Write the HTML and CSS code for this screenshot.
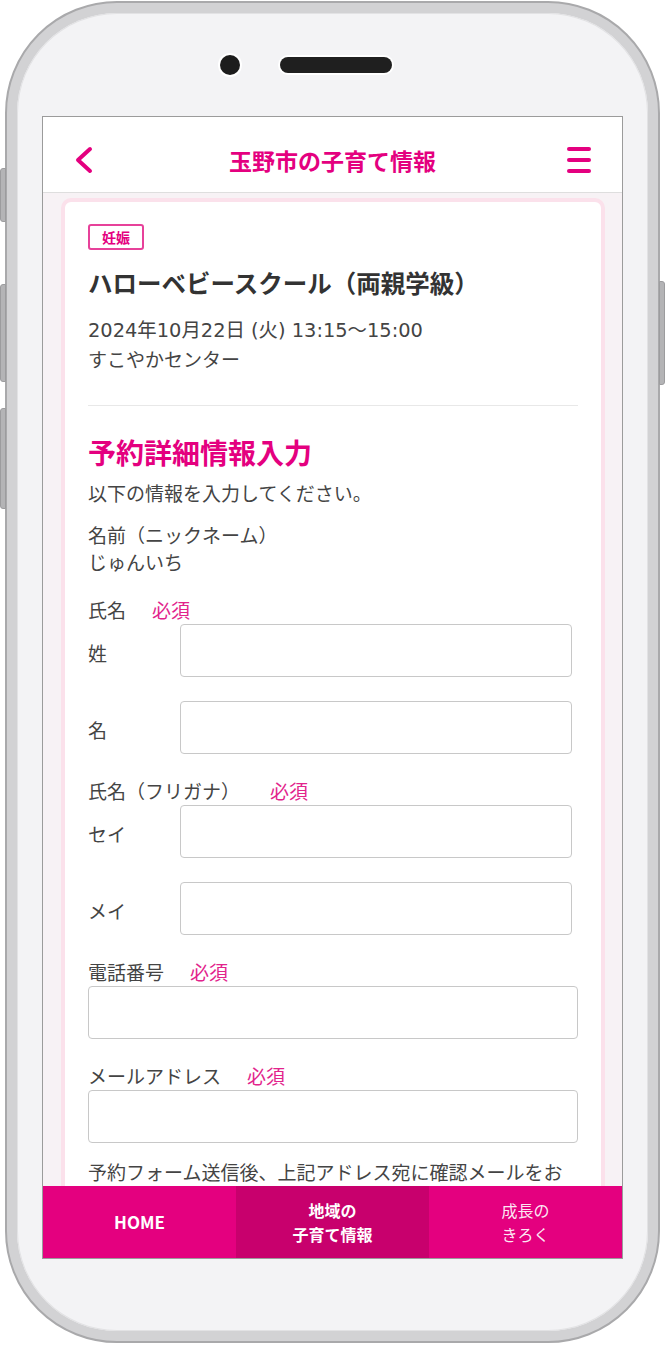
FILE: index.html
```html
<!DOCTYPE html>
<html lang="ja">
<head>
  <meta charset="UTF-8" />
  <meta name="viewport" content="width=device-width, initial-scale=1.0"/>
  <title>玉野市の子育て情報</title>
  <link rel="stylesheet" href="styles.css">
</head>
<body>
  <div class="phone">
    <span class="btn btn-mute"></span>
    <span class="btn btn-vol-up"></span>
    <span class="btn btn-vol-down"></span>
    <span class="btn btn-power"></span>

    <div class="phone-inner">
      <div class="sensors">
        <span class="camera"></span>
        <span class="speaker"></span>
      </div>

      <div class="screen">
        <header class="app-header">
          <svg class="back" width="22" height="30" viewBox="0 0 22 30">
            <polyline points="16,4 4,15 16,26" fill="none" stroke="#e4007f" stroke-width="4" stroke-linecap="round" stroke-linejoin="round"/>
          </svg>
          <h1 class="app-title">玉野市の子育て情報</h1>
          <div class="menu">
            <span></span><span></span><span></span>
          </div>
        </header>

        <main class="content">
          <div class="card">
            <span class="tag">妊娠</span>
            <h2 class="event-title">ハローベビースクール（両親学級）</h2>
            <p class="event-info"><span class="event-date">2024年10月22日 (火) 13:15〜15:00</span><br>すこやかセンター</p>

            <hr class="divider">

            <h3 class="form-title">予約詳細情報入力</h3>
            <p class="lead">以下の情報を入力してください。</p>

            <div class="nickname">
              <p>名前（ニックネーム）</p>
              <p>じゅんいち</p>
            </div>

            <div class="group">
              <div class="label">氏名<span class="req">必須</span></div>
              <div class="row">
                <span class="sub">姓</span>
                <input type="text" class="field">
              </div>
              <div class="row">
                <span class="sub">名</span>
                <input type="text" class="field">
              </div>
            </div>

            <div class="group">
              <div class="label">氏名（フリガナ）<span class="req wide">必須</span></div>
              <div class="row">
                <span class="sub">セイ</span>
                <input type="text" class="field">
              </div>
              <div class="row">
                <span class="sub">メイ</span>
                <input type="text" class="field">
              </div>
            </div>

            <div class="group">
              <div class="label">電話番号<span class="req">必須</span></div>
              <input type="tel" class="field full">
            </div>

            <div class="group">
              <div class="label">メールアドレス<span class="req">必須</span></div>
              <input type="email" class="field full">
            </div>

            <p class="note">予約フォーム送信後、上記アドレス宛に確認メールをお</p>
          </div>
        </main>

        <nav class="tabbar">
          <a class="tab tab-bold">HOME</a>
          <a class="tab tab-bold active">地域の<br>子育て情報</a>
          <a class="tab">成長の<br>きろく</a>
        </nav>
      </div>
    </div>
  </div>
</body>
</html>
```

FILE: styles.css
```css
* {
  box-sizing: border-box;
}
body {
  margin: 0;
  background: #fff;
  font-family: "Noto Sans CJK JP", "Noto Sans", sans-serif;
  color: #444;
}

/* phone frame */
.phone {
  position: relative;
  width: 655px;
  height: 1342px;
  margin: 1px 0 0 5px;
  padding: 10px;
  background: #d2d2d4;
  border: 2px solid #a9a9ab;
  border-radius: 112px;
}
.phone-inner {
  display: flex;
  flex-direction: column;
  height: 100%;
  padding: 0 25px 72px;
  background: #f3f3f5;
  border-radius: 100px;
  box-shadow: inset 0 0 0 1px #e2e2e4;
}
.btn {
  position: absolute;
  width: 6px;
  background: #b4b4b6;
  border: 1px solid #9c9c9e;
}
.btn-mute { left: -7px; top: 165px; height: 54px; border-radius: 3px 0 0 3px; }
.btn-vol-up { left: -7px; top: 281px; height: 98px; border-radius: 3px 0 0 3px; }
.btn-vol-down { left: -7px; top: 405px; height: 101px; border-radius: 3px 0 0 3px; }
.btn-power { right: -7px; top: 278px; height: 104px; border-radius: 0 3px 3px 0; }

.sensors {
  display: flex;
  align-items: center;
  justify-content: center;
  gap: 40px;
  height: 103px;
  padding: 0 54px 0 0;
}
.camera {
  width: 20px;
  height: 20px;
  border-radius: 50%;
  background: #1c1c1c;
  box-shadow: 0 0 0 2px #fff;
}
.speaker {
  width: 112px;
  height: 16px;
  border-radius: 8px;
  background: #1f1f1f;
  box-shadow: 0 0 0 2px #fff;
}

/* screen */
.screen {
  display: flex;
  flex-direction: column;
  height: 1143px;
  border: 1px solid #9b9b9b;
  background: #f7f2f5;
  overflow: hidden;
}
.app-header {
  display: flex;
  align-items: center;
  justify-content: space-between;
  height: 76px;
  padding: 0 31px;
  background: #fff;
  border-bottom: 1px solid #dedede;
  flex-shrink: 0;
}
.back {
  display: block;
  margin-top: 10px;
}
.app-title {
  margin: 10px 0 0 2px;
  font-size: 23px;
  font-weight: bold;
  color: #e4007f;
}
.menu {
  display: flex;
  flex-direction: column;
  gap: 7px;
  width: 24px;
  margin-top: 10px;
}
.menu span {
  height: 4px;
  border-radius: 2px;
  background: #e4007f;
}

.content {
  flex: 1;
  overflow: hidden;
  padding: 5px 17px 0 18px;
}
.card {
  background: #fff;
  border: 4px solid #fbe1eb;
  border-radius: 10px;
  padding: 22px 23px 30px;
}
.tag {
  display: inline-block;
  width: 56px;
  height: 26px;
  line-height: 22px;
  text-align: center;
  font-size: 14px;
  font-weight: bold;
  color: #e4007f;
  border: 2px solid #e7419a;
  border-radius: 3px;
}
.event-title {
  margin: 16px 0 0;
  font-size: 24.5px;
  line-height: 34px;
  font-weight: bold;
  color: #333;
}
.event-info {
  margin: 15px 0 0;
  font-size: 19px;
  line-height: 28px;
}
.event-date {
  font-family: "DejaVu Sans", "Noto Sans CJK JP", sans-serif;
  font-size: 19.4px;
}
.divider {
  margin: 32px 0 0;
  border: none;
  border-top: 1px solid #e8e8e8;
}
.form-title {
  margin: 26px 0 0;
  font-size: 28px;
  line-height: 40px;
  font-weight: bold;
  color: #e4007f;
}
.lead {
  margin: 7px 0 0;
  font-size: 19px;
  line-height: 28px;
}
.nickname {
  margin-top: 14px;
}
.nickname p {
  margin: 0;
  font-size: 19px;
  line-height: 27px;
}
.group {
  margin-top: 21px;
}
.group + .group {
  margin-top: 23px;
}
.label {
  font-size: 19px;
  line-height: 28px;
}
.req {
  margin-left: 26px;
  color: #e2238c;
}
.req.wide {
  margin-left: 30px;
}
.row {
  display: flex;
  align-items: center;
  padding-right: 6px;
}
.row + .row {
  margin-top: 24px;
}
.sub {
  width: 92px;
  flex-shrink: 0;
  font-size: 19px;
  padding-top: 3px;
}
.field {
  flex: 1;
  display: block;
  height: 53px;
  margin: 0;
  border: 1.5px solid #c8c8c8;
  border-radius: 4px;
  background: #fff;
}
.field.full {
  width: 100%;
}
.note {
  margin: 15px 0 0;
  font-size: 19px;
  line-height: 28px;
}

/* bottom tabs */
.tabbar {
  display: grid;
  grid-template-columns: 1fr 1fr 1fr;
  height: 72px;
  flex-shrink: 0;
  background: #e4007f;
}
.tab {
  display: flex;
  align-items: center;
  justify-content: center;
  text-align: center;
  font-size: 16px;
  line-height: 24px;
  color: rgba(255,255,255,0.92);
}
.tab-bold {
  font-weight: bold;
  color: #fff;
}
.tab:first-child {
  font-size: 17px;
}
.tab.active {
  background: #c8006d;
}
```
